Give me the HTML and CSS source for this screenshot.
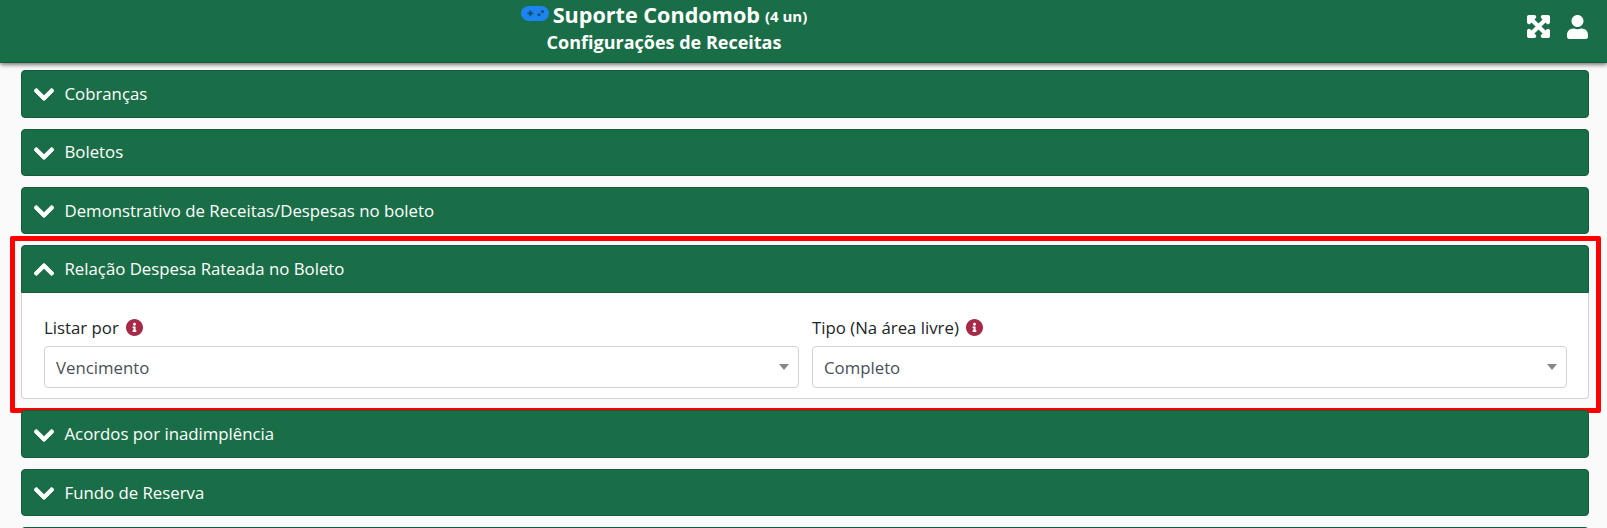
FILE: index.html
```html
<!DOCTYPE html>
<html lang="pt-BR">

<head>
    <meta charset="UTF-8">
    <title>Configurações de Receitas</title>
    <link rel="stylesheet" href="styles.css">
</head>

<body>
    <header class="topo">
        <div class="topo-titulo">
            <div class="topo-nome">
                <svg class="icone-jogo" viewBox="0 0 28 15">
                    <rect x="0" y="0" width="28" height="15" rx="7.500" fill="#1b84f0" />
                    <path d="M6.500 6.500h2v-2h1.800v2h2v1.800h-2v2h-1.800v-2h-2z" fill="#124f66" />
                    <circle cx="18" cy="8.800" r="1.500" fill="#124f66" />
                    <circle cx="21.500" cy="5.500" r="1.500" fill="#124f66" />
                </svg>
                <span>Suporte Condomob</span>
                <small>(4 un)</small>
            </div>
            <div class="topo-sub">Configurações de Receitas</div>
        </div>
        <div class="topo-acoes">
            <svg class="icone-expandir" viewBox="-16 16 480 480">
                <path d="M448 344v112a23.940 23.940 0 0 1-24 24H312c-21.390 0-32.090-25.900-17-41l36.200-36.200L224 295.600 116.770 402.900 153 439c15.090 15.100 4.390 41-17 41H24a23.940 23.940 0 0 1-24-24V344c0-21.400 25.890-32.100 41-17l36.190 36.200L184.460 256 77.180 148.700 41 185c-15.100 15.100-41 4.400-41-17V56a23.940 23.940 0 0 1 24-24h112c21.390 0 32.090 25.900 17 41l-36.200 36.200L224 216.400l107.230-107.300L295 73c-15.090-15.100-4.390-41 17-41h112a23.940 23.940 0 0 1 24 24v112c0 21.400-25.890 32.100-41 17l-36.190-36.200L263.540 256l107.280 107.300L407 327.100c15.100-15.200 41-4.500 41 16.900z" />
            </svg>
            <svg class="icone-usuario" viewBox="0 0 448 512">
                <path d="M224 256c70.700 0 128-57.300 128-128S294.700 0 224 0 96 57.300 96 128s57.300 128 128 128zm89.600 32h-16.700c-22.200 10.200-46.900 16-72.900 16s-50.600-5.800-72.900-16h-16.700C60.200 288 0 348.200 0 422.400V464c0 26.500 21.500 48 48 48h352c26.500 0 48-21.500 48-48v-41.600c0-74.200-60.200-134.400-134.400-134.400z" />
            </svg>
        </div>
    </header>

    <main class="conteudo">
        <section class="painel">
            <div class="painel-titulo">
                <svg class="seta" viewBox="0 0 448 512"><path d="M207.029 381.476L12.686 187.132c-9.373-9.373-9.373-24.569 0-33.941l22.667-22.667c9.357-9.357 24.522-9.375 33.901-.04L224 284.505l154.745-154.021c9.379-9.335 24.544-9.317 33.901.04l22.667 22.667c9.373 9.373 9.373 24.569 0 33.941L240.971 381.476c-9.373 9.372-24.569 9.372-33.942 0z" /></svg>
                Cobranças
            </div>
        </section>
        <section class="painel">
            <div class="painel-titulo">
                <svg class="seta" viewBox="0 0 448 512"><path d="M207.029 381.476L12.686 187.132c-9.373-9.373-9.373-24.569 0-33.941l22.667-22.667c9.357-9.357 24.522-9.375 33.901-.04L224 284.505l154.745-154.021c9.379-9.335 24.544-9.317 33.901.04l22.667 22.667c9.373 9.373 9.373 24.569 0 33.941L240.971 381.476c-9.373 9.372-24.569 9.372-33.942 0z" /></svg>
                Boletos
            </div>
        </section>
        <section class="painel">
            <div class="painel-titulo">
                <svg class="seta" viewBox="0 0 448 512"><path d="M207.029 381.476L12.686 187.132c-9.373-9.373-9.373-24.569 0-33.941l22.667-22.667c9.357-9.357 24.522-9.375 33.901-.04L224 284.505l154.745-154.021c9.379-9.335 24.544-9.317 33.901.04l22.667 22.667c9.373 9.373 9.373 24.569 0 33.941L240.971 381.476c-9.373 9.372-24.569 9.372-33.942 0z" /></svg>
                Demonstrativo de Receitas/Despesas no boleto
            </div>
        </section>
        <section class="painel aberto">
            <div class="painel-titulo">
                <svg class="seta" viewBox="0 0 448 512"><path d="M240.971 130.524l194.343 194.343c9.373 9.373 9.373 24.569 0 33.941l-22.667 22.667c-9.357 9.357-24.522 9.375-33.901.04L224 227.495 69.255 381.516c-9.379 9.335-24.544 9.317-33.901-.04l-22.667-22.667c-9.373-9.373-9.373-24.569 0-33.941L207.030 130.525c9.372-9.373 24.568-9.373 33.941-.001z" /></svg>
                Relação Despesa Rateada no Boleto
            </div>
            <div class="painel-corpo">
                <div class="campo">
                    <label>Listar por
                        <svg class="info" viewBox="8 8 496 496">
                            <path d="M256 8C119.043 8 8 119.083 8 256c0 136.997 111.043 248 248 248s248-111.003 248-248C504 119.083 392.957 8 256 8zm0 110c23.196 0 42 18.804 42 42s-18.804 42-42 42-42-18.804-42-42 18.804-42 42-42zm56 254c0 6.627-5.373 12-12 12h-88c-6.627 0-12-5.373-12-12v-24c0-6.627 5.373-12 12-12h12v-64h-12c-6.627 0-12-5.373-12-12v-24c0-6.627 5.373-12 12-12h64c6.627 0 12 5.373 12 12v100h12c6.627 0 12 5.373 12 12v24z" />
                        </svg>
                    </label>
                    <div class="seletor">Vencimento</div>
                </div>
                <div class="campo">
                    <label>Tipo (Na área livre)
                        <svg class="info" viewBox="8 8 496 496">
                            <path d="M256 8C119.043 8 8 119.083 8 256c0 136.997 111.043 248 248 248s248-111.003 248-248C504 119.083 392.957 8 256 8zm0 110c23.196 0 42 18.804 42 42s-18.804 42-42 42-42-18.804-42-42 18.804-42 42-42zm56 254c0 6.627-5.373 12-12 12h-88c-6.627 0-12-5.373-12-12v-24c0-6.627 5.373-12 12-12h12v-64h-12c-6.627 0-12-5.373-12-12v-24c0-6.627 5.373-12 12-12h64c6.627 0 12 5.373 12 12v100h12c6.627 0 12 5.373 12 12v24z" />
                        </svg>
                    </label>
                    <div class="seletor">Completo</div>
                </div>
            </div>
            <div class="destaque"></div>
        </section>
        <section class="painel">
            <div class="painel-titulo">
                <svg class="seta" viewBox="0 0 448 512"><path d="M207.029 381.476L12.686 187.132c-9.373-9.373-9.373-24.569 0-33.941l22.667-22.667c9.357-9.357 24.522-9.375 33.901-.04L224 284.505l154.745-154.021c9.379-9.335 24.544-9.317 33.901.04l22.667 22.667c9.373 9.373 9.373 24.569 0 33.941L240.971 381.476c-9.373 9.372-24.569 9.372-33.942 0z" /></svg>
                Acordos por inadimplência
            </div>
        </section>
        <section class="painel">
            <div class="painel-titulo">
                <svg class="seta" viewBox="0 0 448 512"><path d="M207.029 381.476L12.686 187.132c-9.373-9.373-9.373-24.569 0-33.941l22.667-22.667c9.357-9.357 24.522-9.375 33.901-.04L224 284.505l154.745-154.021c9.379-9.335 24.544-9.317 33.901.04l22.667 22.667c9.373 9.373 9.373 24.569 0 33.941L240.971 381.476c-9.373 9.372-24.569 9.372-33.942 0z" /></svg>
                Fundo de Reserva
            </div>
        </section>
        <section class="painel">
            <div class="painel-titulo"></div>
        </section>
    </main>
</body>

</html>
```

FILE: styles.css
```css
html,
body {
    height: 100%;
    overflow: hidden;
}

body {
    margin: 0;
    background: #fafafa;
    color: #212529;
    font-family: 'Open Sans', sans-serif;
    font-size: 16.800px;
}

.topo {
    height: 63px;
    background: #1a6e47;
    color: #fff;
    display: flex;
    justify-content: space-between;
    box-shadow: 0 2px 4px rgba(0, 0, 0, 0.5);
    border-bottom: 1px solid #155a3a;
    box-sizing: border-box;
    padding-right: 19px;
}

.topo-titulo {
    width: 1328px;
    text-align: center;
    font-weight: 700;
}

.topo-nome {
    font-size: 21.600px;
    line-height: 26px;
    margin-bottom: 1px;
    display: flex;
    justify-content: center;
    align-items: center;
    gap: 4px;
}

.topo-nome small {
    font-size: 15px;
    margin-left: 1px;
    padding-top: 3px;
}

.icone-jogo {
    width: 28px;
    height: 15px;
    margin-bottom: 3px;
}

.topo-sub {
    font-size: 18px;
    line-height: 24px;
}

.topo-acoes {
    display: flex;
    align-items: center;
    gap: 17px;
    margin-bottom: 9px;
}

.topo-acoes svg {
    fill: #fff;
}

.icone-expandir {
    width: 23px;
    height: 23px;
    stroke: #fff;
    stroke-width: 32;
    stroke-linejoin: round;
}

.icone-usuario {
    width: 21px;
    height: 24px;
}

.conteudo {
    padding: 7.200px 18px 0 21px;
}

.painel {
    position: relative;
    margin-bottom: 11px;
    border-radius: 4px;
}

.painel.aberto {
    margin-bottom: 11.300px;
}

.painel-titulo {
    height: 47.400px;
    box-sizing: border-box;
    background: #1a6e47;
    border: 1px solid #155a3a;
    border-radius: 4px;
    color: #fff;
    display: flex;
    align-items: center;
    gap: 10.500px;
    padding-left: 12px;
    line-height: 24px;
}

.seta {
    width: 20px;
    height: 23px;
    fill: #fff;
    stroke: #fff;
    stroke-width: 22;
    margin-top: 2px;
}

.aberto .seta {
    margin-top: 0;
}

.aberto .painel-titulo {
    border-radius: 4px 4px 0 0;
}

.painel-corpo {
    background: #fff;
    border: 1px solid #ced4da;
    border-top: 0;
    border-radius: 0 0 4px 4px;
    box-sizing: border-box;
    height: 106.400px;
    padding: 23px 21px 0 22px;
    display: grid;
    grid-template-columns: 1fr 1fr;
    gap: 13px;
}

.campo label {
    display: flex;
    align-items: center;
    gap: 7px;
    line-height: 24px;
    margin-bottom: 6px;
}

.info {
    width: 17px;
    height: 17px;
    fill: #a62a48;
}

.seletor {
    height: 42px;
    box-sizing: border-box;
    border: 1px solid #ced4da;
    border-radius: 4px;
    background: #fff;
    color: #495057;
    line-height: 42px;
    padding-left: 11px;
    position: relative;
}

.seletor::after {
    content: "";
    position: absolute;
    right: 9px;
    top: 17px;
    border-style: solid;
    border-width: 6px 5px 0 5px;
    border-color: #888 transparent transparent transparent;
}

.destaque {
    position: absolute;
    left: -11px;
    right: -12px;
    top: -9.400px;
    bottom: -13.800px;
    border: 5px solid #f00;
    border-radius: 2px;
    pointer-events: none;
}
```
